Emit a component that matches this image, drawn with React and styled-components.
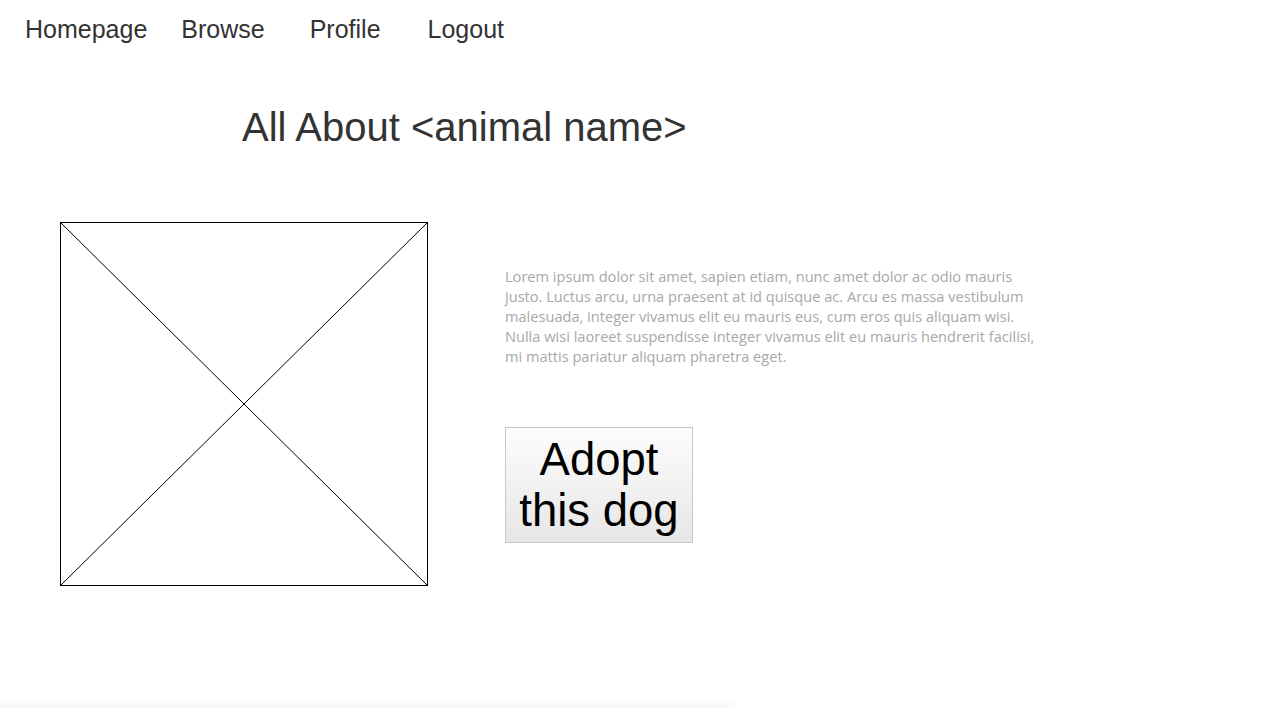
import React from "react";
import styled, { createGlobalStyle } from "styled-components";

const GlobalStyle = createGlobalStyle`
  html, body {
    margin: 0;
    padding: 0;
    background: #fff;
    font-family: "Liberation Sans", Arial, sans-serif;
  }
`;

const Page = styled.div`
  min-height: 708px;
  display: flex;
  flex-direction: column;
`;

const Nav = styled.nav`
  display: flex;
  padding: 15px 0 0 25px;
`;

const NavLink = styled.a`
  font-size: 25px;
  line-height: 29px;
  color: #333;
  text-decoration: none;
  margin-right: ${(p) => p.$gap}px;
  cursor: pointer;
`;

const Title = styled.h1`
  margin: 60px 0 0 242px;
  font-size: 40px;
  line-height: 46px;
  font-weight: normal;
  color: #333;
`;

const Content = styled.div`
  display: flex;
  margin-top: 72px;
  padding-left: 60px;
`;

const Placeholder = styled.svg`
  width: 368px;
  height: 364px;
  flex-shrink: 0;
  display: block;
`;

const Details = styled.div`
  display: flex;
  flex-direction: column;
  align-items: flex-start;
  margin-left: 77px;
  padding-top: 44px;
`;

const Description = styled.p`
  margin: 0;
  width: 546px;
  font-family: "Open Sans", sans-serif;
  font-size: 14.6px;
  line-height: 20px;
  color: #a8a8a8;
`;

const AdoptButton = styled.button`
  margin-top: 61px;
  width: 188px;
  height: 116px;
  padding: 0 6px;
  border: 1px solid #c8c8c8;
  background: linear-gradient(#fdfdfd, #e6e6e6);
  font-family: "Liberation Sans", Arial, sans-serif;
  font-size: 45.5px;
  line-height: 51px;
  color: #000;
  cursor: pointer;
`;

const Footer = styled.div`
  margin-top: auto;
  height: 0;
  width: 730px;
  box-shadow: 0 0 10px 3px rgba(0, 0, 0, 0.07);
`;

const links = [
  { label: "Homepage", gap: 34 },
  { label: "Browse", gap: 45 },
  { label: "Profile", gap: 47 },
  { label: "Logout", gap: 0 },
];

export default function App() {
  return (
    <>
      <GlobalStyle />
      <Page>
        <Nav>
          {links.map((l) => (
            <NavLink key={l.label} $gap={l.gap}>
              {l.label}
            </NavLink>
          ))}
        </Nav>
        <Title>All About &lt;animal name&gt;</Title>
        <Content>
          <Placeholder viewBox="0 0 368 364">
            <rect x="0.5" y="0.5" width="367" height="363" fill="#fff" stroke="#000" />
            <line x1="0.5" y1="0.5" x2="367.5" y2="363.5" stroke="#000" />
            <line x1="367.5" y1="0.5" x2="0.5" y2="363.5" stroke="#000" />
          </Placeholder>
          <Details>
            <Description>
              Lorem ipsum dolor sit amet, sapien etiam, nunc amet dolor ac odio mauris
              justo. Luctus arcu, urna praesent at id quisque ac. Arcu es massa vestibulum
              malesuada, integer vivamus elit eu mauris eus, cum eros quis aliquam wisi.
              Nulla wisi laoreet suspendisse integer vivamus elit eu mauris hendrerit facilisi,
              mi mattis pariatur aliquam pharetra eget.
            </Description>
            <AdoptButton>Adopt this dog</AdoptButton>
          </Details>
        </Content>
        <Footer />
      </Page>
    </>
  );
}
